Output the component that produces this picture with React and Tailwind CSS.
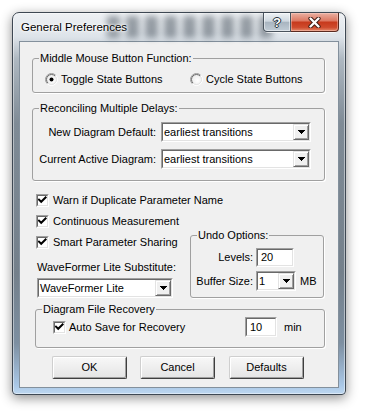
import React from "react";

function Sunken({ className = "", children, inner = "bg-white" }) {
  return (
    <div className={`border border-t-[#a0a0a0] border-l-[#a0a0a0] border-r-white border-b-white ${className}`}>
      <div className={`w-full h-full flex border border-t-[#696969] border-l-[#696969] border-r-[#e3e3e3] border-b-[#e3e3e3] ${inner}`}>
        {children}
      </div>
    </div>
  );
}

function Check() {
  return (
    <Sunken className="w-[13px] h-[13px] shrink-0">
      <svg width="9" height="9" viewBox="0 0 9 9" className="block">
        <path d="M1 3.6 L3.2 5.8 L7.6 1.4" fill="none" stroke="#000" strokeWidth="2" strokeLinecap="square" />
      </svg>
    </Sunken>
  );
}

function Radio({ checked }) {
  return (
    <svg width="13" height="13" viewBox="0 0 13 13" className="block shrink-0">
      <defs>
        <linearGradient id="ro" x1="0" y1="0" x2="1" y2="1">
          <stop offset="0.45" stopColor="#9a9a9a" />
          <stop offset="0.55" stopColor="#ffffff" />
        </linearGradient>
        <linearGradient id="ri" x1="0" y1="0" x2="1" y2="1">
          <stop offset="0.45" stopColor="#6a6a6a" />
          <stop offset="0.55" stopColor="#e3e3e3" />
        </linearGradient>
        <radialGradient id="rf" cx="0.6" cy="0.6" r="0.7">
          <stop offset="0" stopColor="#ffffff" />
          <stop offset="1" stopColor="#e9e9e9" />
        </radialGradient>
      </defs>
      <circle cx="6.5" cy="6.5" r="6" fill="none" stroke="url(#ro)" strokeWidth="1" />
      <circle cx="6.5" cy="6.5" r="5" fill="url(#rf)" stroke="url(#ri)" strokeWidth="1" />
      {checked && <circle cx="6.5" cy="6.5" r="2" fill="#000" />}
    </svg>
  );
}

function Select({ className = "", text }) {
  return (
    <Sunken className={`h-[20px] shrink-0 ${className}`}>
      <span className="flex-1 flex items-center pl-[1px] whitespace-nowrap overflow-hidden">{text}</span>
      <span className="w-[16px] flex items-center justify-center bg-[#f0f0f0] border border-t-[#e3e3e3] border-l-[#e3e3e3] border-r-[#696969] border-b-[#696969] shadow-[inset_1px_1px_0_#fff,inset_-1px_-1px_0_#a0a0a0]">
        <svg width="7" height="4" viewBox="0 0 7 4" className="block" shapeRendering="crispEdges">
          <path d="M0 0 H7 L3.5 4 Z" fill="#000" />
        </svg>
      </span>
    </Sunken>
  );
}

function Field({ className = "", text }) {
  return (
    <Sunken className={`shrink-0 ${className}`}>
      <span className="flex items-center pl-[3px]">{text}</span>
    </Sunken>
  );
}

function Btn({ label, className = "" }) {
  return (
    <div
      className={`w-[75px] h-[23px] flex items-center justify-center rounded-[2px] border border-t-[#cfcfcf] border-l-[#cfcfcf] border-r-[#3f3f3f] border-b-[#3f3f3f] bg-[linear-gradient(180deg,#f8f8f8_0%,#eeeeee_50%,#e4e4e4_100%)] shadow-[inset_1px_1px_0_#ffffff,inset_-1px_-1px_0_#a0a0a0] ${className}`}
    >
      {label}
    </div>
  );
}

function Group({ className = "", title, children }) {
  return (
    <fieldset className={`border border-[#a0a0a0] rounded-[3px] shadow-[1px_1px_0_#ffffff] ${className}`}>
      <legend className="ml-[6px] px-[1px] leading-[13px]">{title}</legend>
      {children}
    </fieldset>
  );
}

export default function App() {
  return (
    <div className="w-[366px] h-[416px] bg-white pt-[12px] pl-[12px] font-['Liberation_Sans',Arial,sans-serif] text-[11px] leading-[13px] text-black overflow-hidden">
      <div className="w-[334px] h-[383px] flex flex-col rounded-t-[7px] rounded-b-[4px] border border-[#3e4853] px-[6px] pb-[6px] bg-[linear-gradient(180deg,#eef1f4_0px,#dde3e9_24px,#aeb8c1_46px,#7f8b96_110px,#74808b_260px,#7d8fa1_330px,#a9c7e6_372px,#c2dbf2_383px)] shadow-[0_3px_12px_rgba(0,0,0,0.45),inset_0_0_0_1px_rgba(255,255,255,0.45)]">
        <div className="h-[28px] relative flex items-start shrink-0">
          <div className="absolute left-[88px] top-[3px] w-[170px] h-[22px] opacity-45 blur-[3px] bg-[repeating-linear-gradient(90deg,#323d48_0px,#323d48_13px,transparent_13px,transparent_19px)]" />
          <span className="relative ml-[2px] mt-[7px] text-[11.5px] leading-[14px] [text-shadow:0_0_6px_#fff,0_0_3px_#fff,0_0_2px_#fff]">
            General Preferences
          </span>
          <div className="relative ml-auto flex h-[19px] rounded-b-[5px] shadow-[0_1px_0_rgba(255,255,255,0.7)]">
            <div className="w-[28px] h-[19px] flex items-center justify-center border border-t-0 border-[#4a545e] rounded-bl-[4px] bg-[linear-gradient(180deg,#eef2f5_0%,#cfd8e0_45%,#a9b5c0_52%,#c1ccd6_100%)] shadow-[inset_0_0_0_1px_rgba(255,255,255,0.5)]">
              <span className="font-bold text-[13px] leading-[13px] text-white [text-shadow:0_0_1px_#1e2830,1px_0_0_#2a343d,-1px_0_0_#2a343d,0_1px_0_#2a343d,0_-1px_0_#2a343d]">
                ?
              </span>
            </div>
            <div className="w-[48px] h-[19px] flex items-center justify-center border border-t-0 border-l-0 border-[#5a2a20] rounded-br-[4px] bg-[linear-gradient(180deg,#eab0a2_0%,#dd7a64_42%,#c73a1d_52%,#cf4b2d_80%,#e48a6c_100%)] shadow-[inset_0_0_0_1px_rgba(255,220,210,0.4)]">
              <svg width="13" height="11" viewBox="0 0 13 11" className="block">
                <path d="M2.5 1.5 L10.5 9.5 M10.5 1.5 L2.5 9.5" stroke="#3a1810" strokeWidth="4.2" strokeLinecap="round" />
                <path d="M2.5 1.5 L10.5 9.5 M10.5 1.5 L2.5 9.5" stroke="#ffffff" strokeWidth="2.4" strokeLinecap="round" />
              </svg>
            </div>
          </div>
        </div>

        <div className="flex-1 border border-[#83909c] bg-[#f0f0f0] flex flex-col">
          <Group title="Middle Mouse Button Function:" className="mt-[10px] ml-[12px] w-[293px] pb-[5px]">
            <div className="mt-[6px] h-[16px] flex items-center pl-[12px]">
              <div className="w-[145px] flex items-center gap-[3px]">
                <Radio checked />
                <span>Toggle State Buttons</span>
              </div>
              <div className="flex items-center gap-[3px]">
                <Radio />
                <span>Cycle State Buttons</span>
              </div>
            </div>
          </Group>

          <Group title="Reconciling Multiple Delays:" className="mt-[9px] ml-[12px] w-[293px] pb-[11px]">
            <div className="mt-[7px] flex flex-col items-end gap-[7px] pr-[13px]">
              <div className="flex items-center gap-[5px]">
                <span>New Diagram Default:</span>
                <Select className="w-[150px]" text="earliest transitions" />
              </div>
              <div className="flex items-center gap-[5px]">
                <span>Current Active Diagram:</span>
                <Select className="w-[150px]" text="earliest transitions" />
              </div>
            </div>
          </Group>

          <div className="mt-[9px] ml-[16px] h-[21px] flex items-center gap-[4px]">
            <Check />
            <span>Warn if Duplicate Parameter Name</span>
          </div>
          <div className="ml-[16px] h-[21px] flex items-center gap-[4px]">
            <Check />
            <span>Continuous Measurement</span>
          </div>

          <div className="-mt-[3px] ml-[16px] flex items-start">
            <div className="w-[154px] pt-[3px] flex flex-col">
              <div className="h-[21px] flex items-center gap-[4px]">
                <Check />
                <span>Smart Parameter Sharing</span>
              </div>
              <span className="mt-[8px] ml-[1px]">WaveFormer Lite Substitute:</span>
              <Select className="mt-[4px] ml-[1px] w-[136px]" text="WaveFormer Lite" />
            </div>
            <Group title="Undo Options:" className="w-[134px] pb-[6px]">
              <div className="mt-[6px] pl-[5px] flex flex-col">
                <div className="h-[19px] flex items-center">
                  <span className="w-[57px] text-right">Levels:</span>
                  <Field className="ml-[3px] w-[38px] h-[19px]" text="20" />
                </div>
                <div className="mt-[4px] h-[20px] flex items-center">
                  <span className="w-[57px] text-right">Buffer Size:</span>
                  <Select className="ml-[3px] w-[40px]" text="1" />
                  <span className="ml-[4px]">MB</span>
                </div>
              </div>
            </Group>
          </div>

          <Group title="Diagram File Recovery" className="mt-[5px] ml-[15px] w-[290px] pb-[10px]">
            <div className="mt-[1px] h-[20px] flex items-center pl-[17px]">
              <div className="w-[192px] flex items-center gap-[3px]">
                <Check />
                <span>Auto Save for Recovery</span>
              </div>
              <Field className="w-[32px] h-[20px]" text="10" />
              <span className="ml-[7px]">min</span>
            </div>
          </Group>

          <div className="mt-[8px] ml-[32px] flex">
            <Btn label="OK" />
            <Btn label="Cancel" className="ml-[13px]" />
            <Btn label="Defaults" className="ml-[14px]" />
          </div>
        </div>
      </div>
    </div>
  );
}
